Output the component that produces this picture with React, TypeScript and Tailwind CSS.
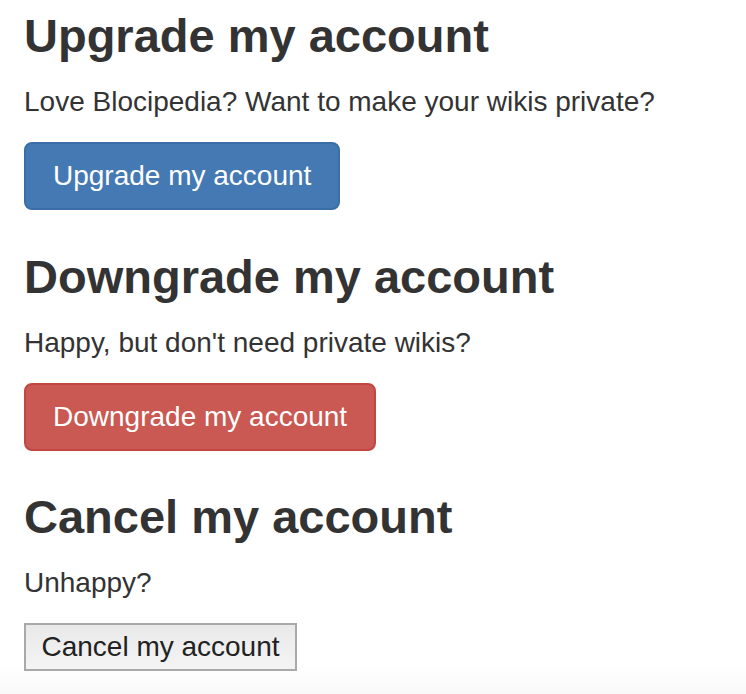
import React from 'react'

const font = { fontFamily: '"Liberation Sans", Arial, Helvetica, sans-serif' }

interface SectionProps {
  title: string
  blurb: string
  children: React.ReactNode
}

function Section({ title, blurb, children }: SectionProps) {
  return (
    <section>
      <h3 className="text-[47px] leading-[52px] font-bold text-[#333]">{title}</h3>
      <p className="mt-[20px] mb-[20px] text-[28px] leading-[40px] text-[#333]">{blurb}</p>
      <div className="flex">{children}</div>
    </section>
  )
}

export default function App() {
  return (
    <div
      style={font}
      className="h-[694px] overflow-hidden pl-[24px] pt-[10px] bg-[linear-gradient(to_bottom,#ffffff_662px,#f9f9f9_694px)]"
    >
      {/* Upgrade */}
      <Section title="Upgrade my account" blurb="Love Blocipedia? Want to make your wikis private?">
        <button className="h-[68px] px-[27px] rounded-[8px] border-2 border-[#3a6ea6] bg-[#4479b3] text-white text-[28px] leading-[40px]">
          Upgrade my account
        </button>
      </Section>

      {/* Downgrade */}
      <div className="mt-[41px]">
        <Section title="Downgrade my account" blurb="Happy, but don't need private wikis?">
          <button className="h-[68px] px-[27px] rounded-[8px] border-2 border-[#c2463f] bg-[#c95952] text-white text-[28px] leading-[40px]">
            Downgrade my account
          </button>
        </Section>
      </div>

      {/* Cancel */}
      <div className="mt-[40px]">
        <Section title="Cancel my account" blurb="Unhappy?">
          <button className="h-[48px] w-[273px] px-[15px] border-2 border-[#a9a9a9] bg-[linear-gradient(to_bottom,#e9e9e9,#f4f4f4)] text-[#222] text-[28px] leading-[32px]">
            Cancel my account
          </button>
        </Section>
      </div>
    </div>
  )
}
